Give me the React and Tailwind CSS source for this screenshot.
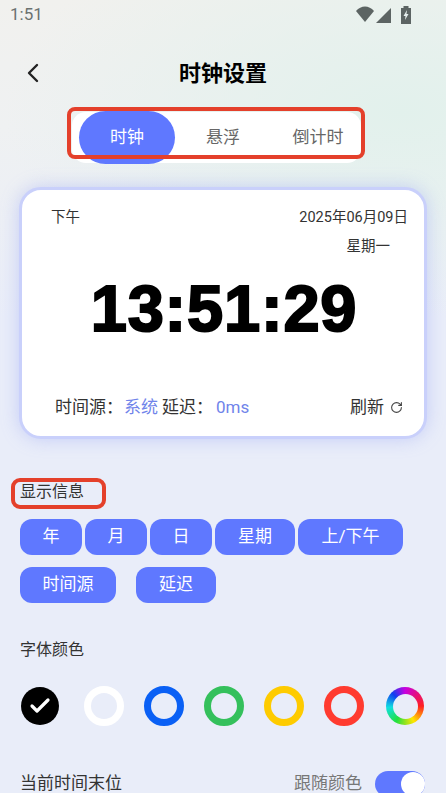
import React from "react";
import { ChevronLeft, RotateCw, Check } from "lucide-react";

const font = "font-['Roboto','Noto_Sans_CJK_SC',sans-serif]";

const rings = [
  "border-white",
  "border-[#0a60f5]",
  "border-[#34c05c]",
  "border-[#fecb00]",
  "border-[#ff3b30]",
];

function Chip({ label, width }) {
  return (
    <div className={`${width} h-[36px] flex items-center justify-center rounded-[12px] bg-[#5f78ff] text-white text-[17px]`}>
      {label}
    </div>
  );
}

function StatusIcons() {
  return (
    <div className="flex items-center gap-[10px] mr-[35px]">
      <svg width="35" height="18" viewBox="0 0 35 18" className="text-[#5c6463]" fill="currentColor">
        <path d="M0 5 C5 -1 13 -1 18 5 L9 16 Z" />
        <path d="M20 17 L35 2 L35 17 Z" />
      </svg>
      <svg width="10" height="18" viewBox="0 0 10 18" fill="#5c6463">
        <path d="M2.5 0H7.5V2H10V18H0V2H2.5Z" />
        <path d="M6 4 L2.5 10 H4.5 L4 14 L7.5 8 H5.5Z" fill="#e6efee" />
      </svg>
    </div>
  );
}

export default function App() {
  return (
    <div className={`${font} relative w-[446px] h-[793px] overflow-hidden bg-[#e9edf9] text-[#333]`}>
      {/* soft green tint behind the header */}
      <div className="absolute inset-x-0 top-0 h-[320px] bg-[radial-gradient(ellipse_at_90%_35%,#e2f1ec_0%,transparent_70%),linear-gradient(to_bottom,#f1f1ee_0%,#eff1f2_40%,#e9edf9_100%)]" />

      <div className="relative">
        <div className="h-[30px] flex items-center justify-between pl-[10px] text-[#6b7270] text-[17px]">
          <span>1:51</span>
          <StatusIcons />
        </div>

        <div className="h-[56px] mt-[15px] flex items-center justify-center relative">
          <ChevronLeft className="absolute left-[17px] text-[#222]" size={32} strokeWidth={1.8} />
          <h1 className="text-[22px] font-bold text-black">时钟设置</h1>
        </div>

        <div className="relative ml-[72px] w-[289px] mt-[11px] h-[51px] bg-white rounded-[14px] flex items-center text-[17px] text-[#666]">
          <div className="w-[96px] h-[53px] ml-[7px] flex items-center justify-center rounded-full bg-[#5f78ff] text-white">
            时钟
          </div>
          <div className="w-[96px] text-center">悬浮</div>
          <div className="w-[90px] pl-[4px] text-center">倒计时</div>
          <div className="absolute -left-[5px] -top-[5px] w-[298px] h-[52px] border-[4px] border-[#e4402b] rounded-[8px]" />
        </div>

        <div className="ml-[19px] w-[408px] mt-[24px] h-[252px] bg-white border-[3px] border-[#c9d0fb] rounded-[22px] shadow-[0_0_18px_rgba(140,155,245,0.4)] flex flex-col">
          <div className="flex justify-between pt-[17px] pl-[29px] pr-[16px] text-[14.5px]">
            <span>下午</span>
            <span>2025年06月09日</span>
          </div>
          <div className="text-right pr-[34px] mt-[7px] text-[14.5px]">星期一</div>
          <div className="mt-[13px] pl-[2px] text-center text-[65px] leading-[76px] tracking-[0.8px] font-bold text-black font-['Liberation_Sans',sans-serif] [-webkit-text-stroke:2px_black]">
            13:51:29
          </div>
          <div className="mt-auto mb-[16px] flex items-center pl-[33px] pr-[21px] text-[17px]">
            <span>时间源：</span>
            <span className="text-[#7084ea] ml-[1px]">系统</span>
            <span className="ml-[4px]">延迟：</span>
            <span className="text-[#7084ea] ml-[3px]">0ms</span>
            <span className="ml-auto">刷新</span>
            <RotateCw className="ml-[6px] text-[#444]" size={13} strokeWidth={2} />
          </div>
        </div>

        <div className="relative mt-[40px] ml-[20px] w-fit text-[16px] leading-[26px]">
          显示信息
          <div className="absolute -left-[9px] -top-[1px] w-[95px] h-[31px] border-[4px] border-[#e4402b] rounded-[9px]" />
        </div>

        <div className="mt-[14px] ml-[20px] flex gap-[3px]">
          <Chip label="年" width="w-[62px]" />
          <Chip label="月" width="w-[62px]" />
          <Chip label="日" width="w-[62px]" />
          <Chip label="星期" width="w-[80px]" />
          <Chip label="上/下午" width="w-[105px]" />
        </div>
        <div className="mt-[12px] ml-[20px] flex gap-[20px]">
          <Chip label="时间源" width="w-[96px]" />
          <Chip label="延迟" width="w-[80px]" />
        </div>

        <div className="mt-[34px] ml-[20px] text-[16px] leading-[26px]">字体颜色</div>

        <div className="mt-[23px] ml-[21px] flex items-center">
          <div className="w-[38px] h-[38px] mr-[25px] rounded-full bg-black flex items-center justify-center">
            <Check className="text-white" size={24} strokeWidth={3.2} />
          </div>
          <div className="flex gap-[20px]">
            {rings.map((ring) => (
              <div key={ring} className={`w-[40px] h-[40px] rounded-full border-[7px] ${ring}`} />
            ))}
          </div>
          <div className="w-[38px] h-[38px] ml-[22px] rounded-full flex items-center justify-center bg-[conic-gradient(#c800e0,#ff2020_90deg,#ffe600_150deg,#22e040_210deg,#10e0e0_265deg,#1040f0_315deg,#c800e0)]">
            <div className="w-[25px] h-[25px] rounded-full bg-[#e9edf9]" />
          </div>
        </div>

        <div className="mt-[45px] ml-[20px] mr-[21px] flex items-center justify-between text-[17px]">
          <span>当前时间末位</span>
          <div className="flex items-center gap-[13px]">
            <span className="text-[#777]">跟随颜色</span>
            <div className="w-[50px] h-[26px] rounded-full bg-[#5f78ff] flex items-center justify-end">
              <div className="w-[24px] h-[24px] rounded-full bg-white" />
            </div>
          </div>
        </div>
      </div>
    </div>
  );
}
